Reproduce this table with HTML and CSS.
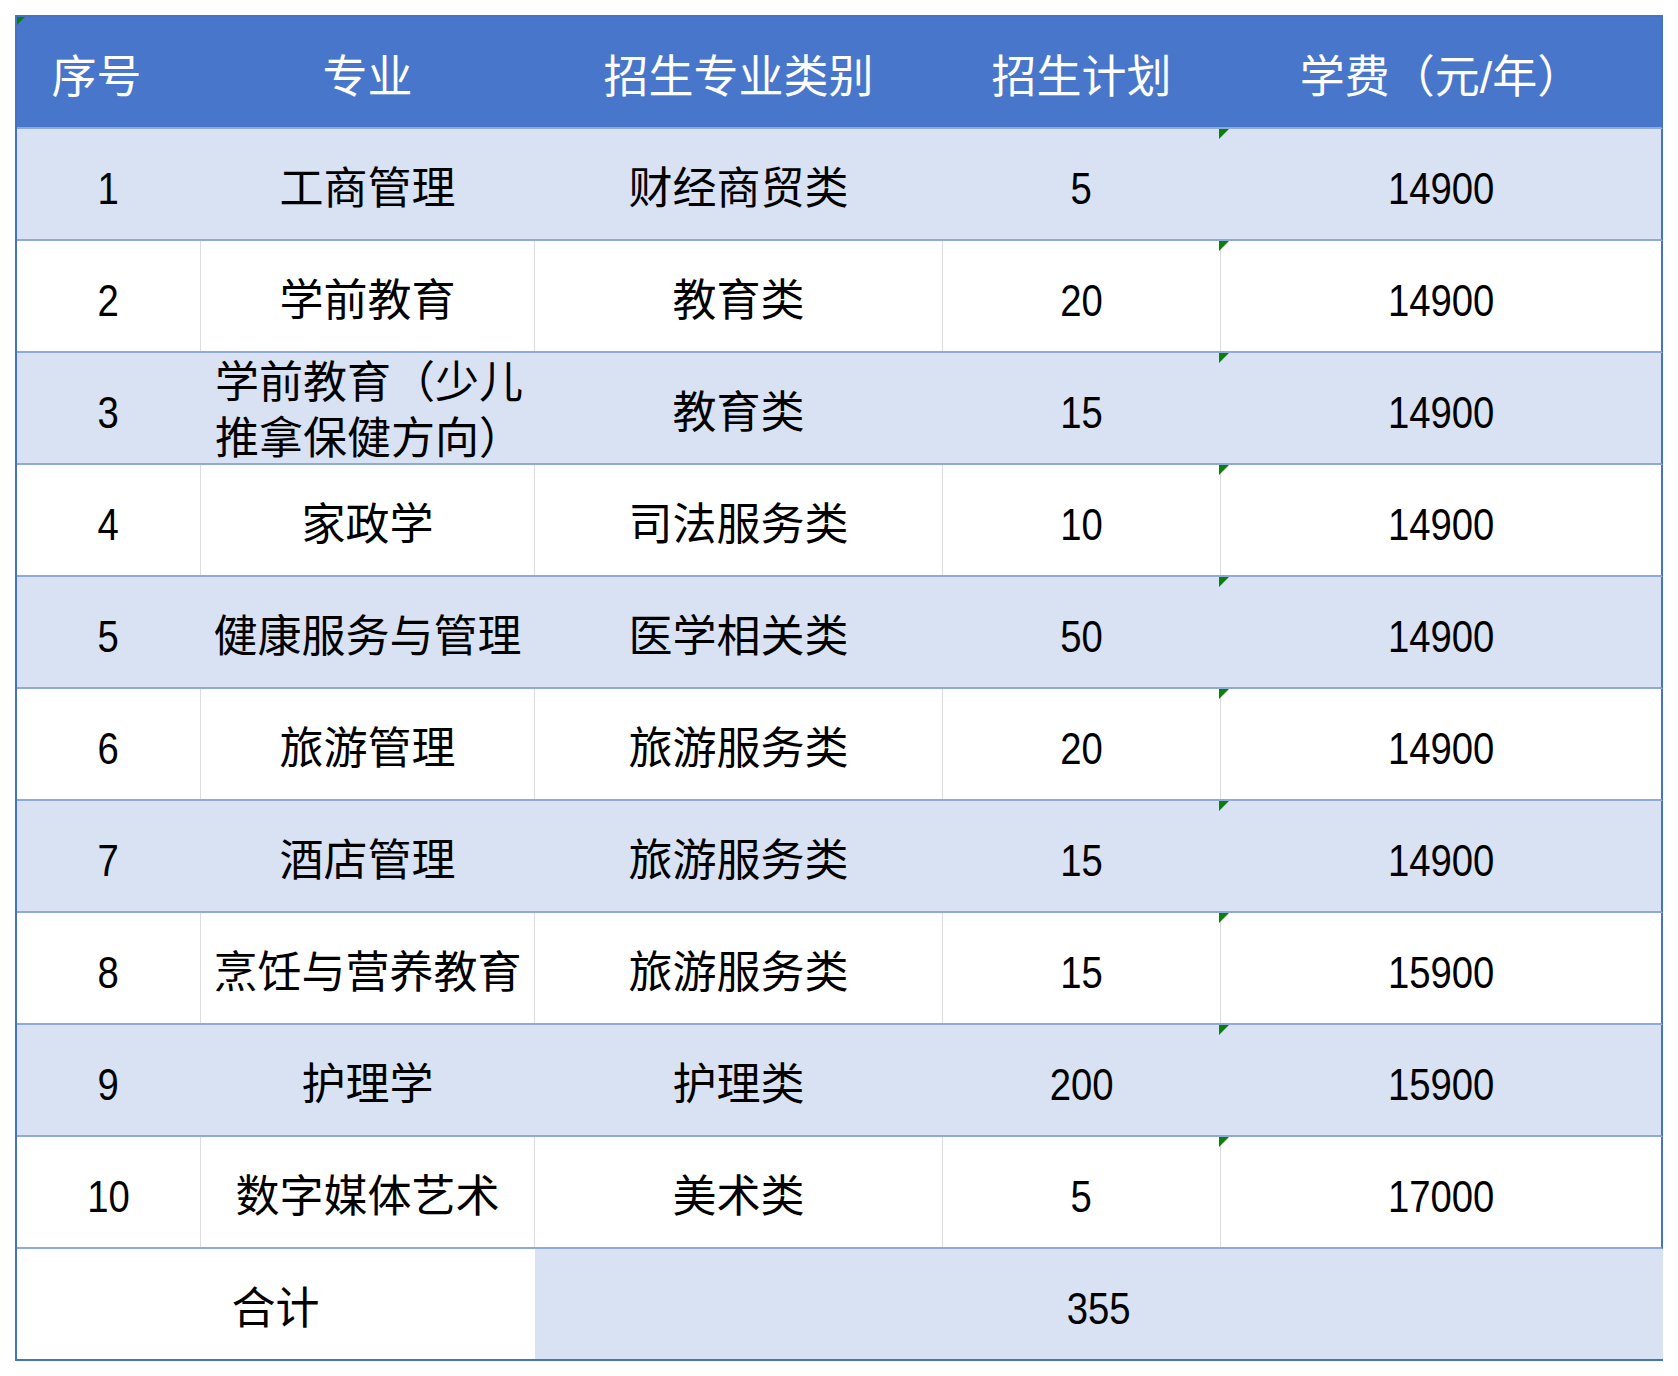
FILE: index.html
```html
<!DOCTYPE html>
<html lang="zh-CN">
<head>
<meta charset="utf-8">
<title>招生计划</title>
<link rel="stylesheet" href="styles.css">
</head>
<body>
<div class="sheet">
  <div class="row head">
    <div class="c c1 mark-h idx-h">序号</div>
    <div class="c c2">专业</div>
    <div class="c c3">招生专业类别</div>
    <div class="c c4">招生计划</div>
    <div class="c c5">学费（元/年）</div>
  </div>
  <div class="row band">
    <div class="c c1"><span class="num">1</span></div>
    <div class="c c2">工商管理</div>
    <div class="c c3">财经商贸类</div>
    <div class="c c4"><span class="num">5</span></div>
    <div class="c c5 mark"><span class="num">14900</span></div>
  </div>
  <div class="row plain">
    <div class="c c1"><span class="num">2</span></div>
    <div class="c c2">学前教育</div>
    <div class="c c3">教育类</div>
    <div class="c c4"><span class="num">20</span></div>
    <div class="c c5 mark"><span class="num">14900</span></div>
  </div>
  <div class="row band">
    <div class="c c1"><span class="num">3</span></div>
    <div class="c c2 wrap">学前教育（少儿<br>推拿保健方向）</div>
    <div class="c c3">教育类</div>
    <div class="c c4"><span class="num">15</span></div>
    <div class="c c5 mark"><span class="num">14900</span></div>
  </div>
  <div class="row plain">
    <div class="c c1"><span class="num">4</span></div>
    <div class="c c2">家政学</div>
    <div class="c c3">司法服务类</div>
    <div class="c c4"><span class="num">10</span></div>
    <div class="c c5 mark"><span class="num">14900</span></div>
  </div>
  <div class="row band">
    <div class="c c1"><span class="num">5</span></div>
    <div class="c c2">健康服务与管理</div>
    <div class="c c3">医学相关类</div>
    <div class="c c4"><span class="num">50</span></div>
    <div class="c c5 mark"><span class="num">14900</span></div>
  </div>
  <div class="row plain">
    <div class="c c1"><span class="num">6</span></div>
    <div class="c c2">旅游管理</div>
    <div class="c c3">旅游服务类</div>
    <div class="c c4"><span class="num">20</span></div>
    <div class="c c5 mark"><span class="num">14900</span></div>
  </div>
  <div class="row band">
    <div class="c c1"><span class="num">7</span></div>
    <div class="c c2">酒店管理</div>
    <div class="c c3">旅游服务类</div>
    <div class="c c4"><span class="num">15</span></div>
    <div class="c c5 mark"><span class="num">14900</span></div>
  </div>
  <div class="row plain">
    <div class="c c1"><span class="num">8</span></div>
    <div class="c c2">烹饪与营养教育</div>
    <div class="c c3">旅游服务类</div>
    <div class="c c4"><span class="num">15</span></div>
    <div class="c c5 mark"><span class="num">15900</span></div>
  </div>
  <div class="row band">
    <div class="c c1"><span class="num">9</span></div>
    <div class="c c2">护理学</div>
    <div class="c c3">护理类</div>
    <div class="c c4"><span class="num">200</span></div>
    <div class="c c5 mark"><span class="num">15900</span></div>
  </div>
  <div class="row plain">
    <div class="c c1"><span class="num">10</span></div>
    <div class="c c2">数字媒体艺术</div>
    <div class="c c3">美术类</div>
    <div class="c c4"><span class="num">5</span></div>
    <div class="c c5 mark"><span class="num">17000</span></div>
  </div>
  <div class="row total">
    <div class="c c12">合计</div>
    <div class="c c345"><span class="num">355</span></div>
  </div>
</div>
</body>
</html>
```

FILE: styles.css
```css
html, body {
  margin: 0;
  padding: 0;
  background: #ffffff;
}

.sheet {
  margin: 15px 0 0 15px;
  width: 1648px;
  box-sizing: border-box;
  border: 2px solid #4472c4;
  border-right: none;
  font-family: "Liberation Sans", "Noto Sans CJK SC", sans-serif;
  font-size: 44px;
  color: #000000;
  text-spacing-trim: space-all;
}

.row {
  display: flex;
  height: 112px;
  box-sizing: border-box;
  border-bottom: 2px solid #8eaadb;
  border-right: 2px solid #4472c4;
}

.c {
  display: flex;
  align-items: center;
  justify-content: center;
  box-sizing: border-box;
  height: 100%;
  line-height: 56px;
  padding-top: 9px;
  border-right: 1px solid transparent;
  white-space: nowrap;
}

.c1 { width: 184px; }
.c2 { width: 334px; }
.c3 { width: 408px; }
.c4 { width: 278px; }
.c5 { width: 440px; border-right: none; }

.head {
  background: #4876ca;
  color: #ffffff;
  font-size: 45px;
}

.head .c {
  padding-top: 12px;
  padding-bottom: 0;
}

.head .idx-h {
  padding-right: 24px;
}

.band {
  background: #d9e2f3;
}

.plain {
  background: #ffffff;
}

.plain .c {
  border-right-color: #dcdcdc;
}

.plain .c5 {
  border-right: none;
}

.wrap {
  justify-content: flex-start;
  padding-left: 14px;
  padding-top: 6px;
  white-space: normal;
}

.num {
  display: inline-block;
  transform: scaleX(0.87);
}

.total {
  height: 110px;
  border-bottom: none;
  border-right: none;
}

.c12 {
  width: 518px;
  background: #ffffff;
}

.c345 {
  width: 1128px;
  background: #d9e2f3;
}

.mark, .mark-h {
  position: relative;
}

.mark::before,
.mark-h::before {
  content: "";
  position: absolute;
  top: 0;
  background: #0a800a;
  clip-path: polygon(0 0, 100% 0, 0 100%);
}

.mark::before {
  left: -2px;
  width: 10px;
  height: 10px;
}

.mark-h::before {
  left: 0;
  width: 8px;
  height: 8px;
}
```
